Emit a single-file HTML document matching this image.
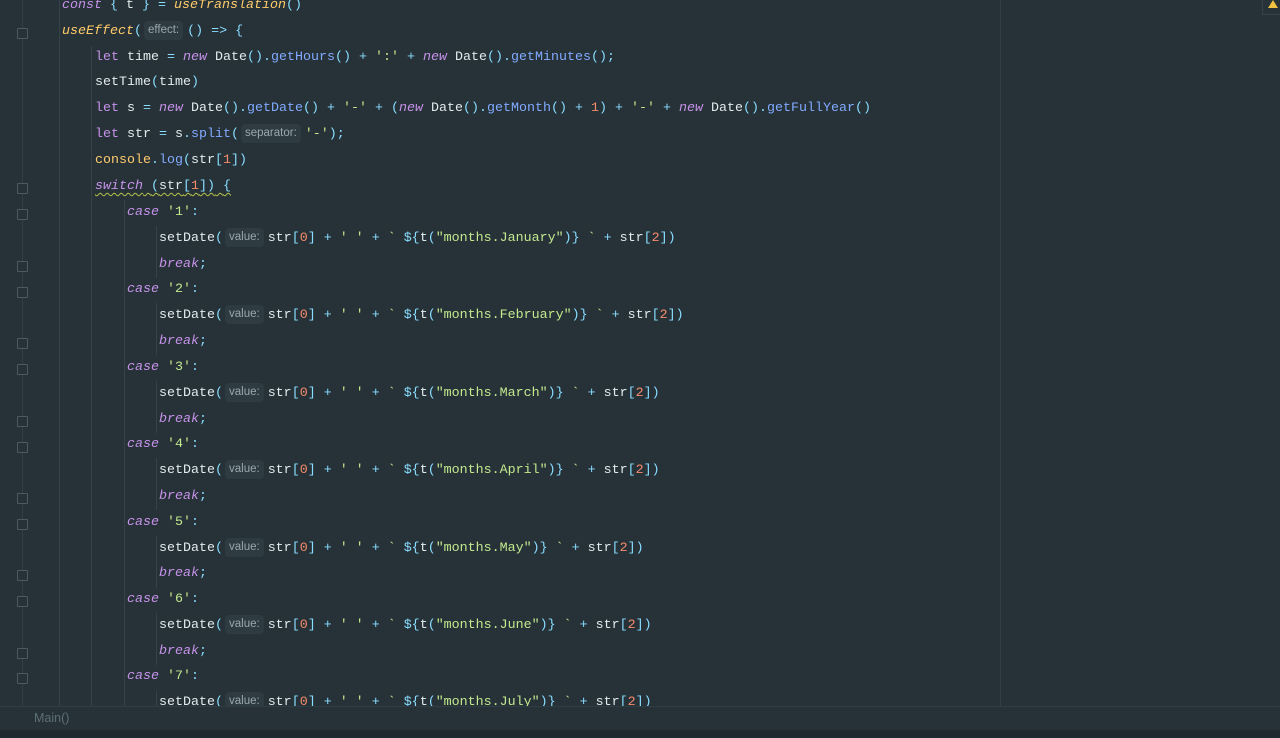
<!DOCTYPE html>
<html><head><meta charset="utf-8"><style>
html,body{margin:0;padding:0;background:#263238;width:1280px;height:738px;overflow:hidden}
.ed{position:absolute;left:0;top:0;width:1280px;height:706px;overflow:hidden}
.l{position:absolute;left:0;height:26px;margin-top:2px;line-height:26px;white-space:pre;font-family:"Liberation Mono",monospace;font-size:13.33px;color:#E2EBEC}
.k{color:#C792EA;font-style:italic}
.kn{color:#C792EA}
.f{color:#82AAFF}
.y{color:#FFCB6B}
.yi{color:#FFCB6B;font-style:italic}
.p{color:#89DDFF}
.s{color:#C3E88D}
.n{color:#F78C6C}
.h{display:inline-block;font-family:"Liberation Sans",sans-serif;font-size:11.5px;color:#9aa8ad;background:#2e3b41;border-radius:4px;padding:0 4px;line-height:19px;margin:0 4px 0 2px;vertical-align:1px}
.w{text-decoration:underline wavy #b6c34a;text-decoration-thickness:1px;text-underline-offset:3px}
.g{position:absolute;width:1px;background:#34434a}
.fm{position:absolute;left:17px;width:9px;height:9px;border:1px solid #4a5a60;border-radius:1px;background:#263238}
.bar{position:absolute;left:0;top:706px;width:1280px;height:24px;background:#263238;border-top:1px solid #2f3d44}
.bar span{position:absolute;left:34px;top:4px;font-family:"Liberation Sans",sans-serif;font-size:12.5px;color:#5d6f76}
.bot{position:absolute;left:0;top:730px;width:1280px;height:8px;background:#1f292e}
</style></head><body>
<div class="ed">
<div class="g" style="left:22px;top:0;height:706px;background:#303e45"></div>
<div class="g" style="left:59px;top:0;height:706px"></div>
<div class="g" style="left:91px;top:46px;height:660px"></div>
<div class="g" style="left:124px;top:200px;height:506px"></div>
<div class="g" style="left:156px;top:226px;height:52px"></div>
<div class="g" style="left:156px;top:303px;height:52px"></div>
<div class="g" style="left:156px;top:381px;height:52px"></div>
<div class="g" style="left:156px;top:458px;height:52px"></div>
<div class="g" style="left:156px;top:536px;height:52px"></div>
<div class="g" style="left:156px;top:613px;height:52px"></div>
<div class="g" style="left:156px;top:691px;height:15px"></div>
<div class="g" style="left:1000px;top:0;height:706px;background:#303e45"></div>
<div class="fm" style="top:28px"></div>
<div class="fm" style="top:183px"></div>
<div class="fm" style="top:209px"></div><div class="fm" style="top:261px"></div>
<div class="fm" style="top:287px"></div><div class="fm" style="top:338px"></div>
<div class="fm" style="top:364px"></div><div class="fm" style="top:416px"></div>
<div class="fm" style="top:442px"></div><div class="fm" style="top:493px"></div>
<div class="fm" style="top:519px"></div><div class="fm" style="top:570px"></div>
<div class="fm" style="top:596px"></div><div class="fm" style="top:648px"></div>
<div class="fm" style="top:673px"></div>
<div style="position:absolute;left:1262px;top:0;width:18px;height:14px;border-left:1px solid #34434a;border-bottom:1px solid #34434a"></div>
<div style="position:absolute;left:1268px;top:0;width:0;height:0;border-left:5px solid transparent;border-right:5px solid transparent;border-bottom:8px solid #f0c040"></div>

<div class="l" style="top:-9px;left:62px"><span class="k">const</span> <span class="p">{</span> t <span class="p">}</span> <span class="p">=</span> <span class="yi">useTranslation</span><span class="p">()</span></div>
<div class="l" style="top:17px;left:62px"><span class="yi">useEffect</span><span class="p">(</span><span class="h">effect:</span><span class="p">()</span> <span class="p">=&gt;</span> <span class="p">{</span></div>
<div class="l" style="top:43px;left:95px"><span class="kn">let</span> time <span class="p">=</span> <span class="k">new</span> Date<span class="p">().</span><span class="f">getHours</span><span class="p">()</span> <span class="p">+</span> <span class="s">':'</span> <span class="p">+</span> <span class="k">new</span> Date<span class="p">().</span><span class="f">getMinutes</span><span class="p">();</span></div>
<div class="l" style="top:68px;left:95px">setTime<span class="p">(</span>time<span class="p">)</span></div>
<div class="l" style="top:94px;left:95px"><span class="kn">let</span> s <span class="p">=</span> <span class="k">new</span> Date<span class="p">().</span><span class="f">getDate</span><span class="p">()</span> <span class="p">+</span> <span class="s">'-'</span> <span class="p">+</span> <span class="p">(</span><span class="k">new</span> Date<span class="p">().</span><span class="f">getMonth</span><span class="p">()</span> <span class="p">+</span> <span class="n">1</span><span class="p">)</span> <span class="p">+</span> <span class="s">'-'</span> <span class="p">+</span> <span class="k">new</span> Date<span class="p">().</span><span class="f">getFullYear</span><span class="p">()</span></div>
<div class="l" style="top:120px;left:95px"><span class="kn">let</span> str <span class="p">=</span> s<span class="p">.</span><span class="f">split</span><span class="p">(</span><span class="h">separator:</span><span class="s">'-'</span><span class="p">);</span></div>
<div class="l" style="top:146px;left:95px"><span class="y">console</span><span class="p">.</span><span class="f">log</span><span class="p">(</span>str<span class="p">[</span><span class="n">1</span><span class="p">])</span></div>
<div class="l" style="top:172px;left:95px"><span class="w"><span class="k">switch</span> <span class="p">(</span>str<span class="p">[</span><span class="n">1</span><span class="p">])</span> <span class="p">{</span></span></div>

<div class="l" style="top:198px;left:127px"><span class="k">case</span> <span class="s">'1'</span><span class="p">:</span></div>
<div class="l" style="top:224px;left:159px">setDate<span class="p">(</span><span class="h">value:</span>str<span class="p">[</span><span class="n">0</span><span class="p">]</span> <span class="p">+</span> <span class="s">' '</span> <span class="p">+</span> <span class="s">`</span> <span class="p">${</span>t<span class="p">(</span><span class="s">"months.January"</span><span class="p">)}</span> <span class="s">`</span> <span class="p">+</span> str<span class="p">[</span><span class="n">2</span><span class="p">])</span></div>
<div class="l" style="top:250px;left:159px"><span class="k">break</span><span class="p">;</span></div>
<div class="l" style="top:275px;left:127px"><span class="k">case</span> <span class="s">'2'</span><span class="p">:</span></div>
<div class="l" style="top:301px;left:159px">setDate<span class="p">(</span><span class="h">value:</span>str<span class="p">[</span><span class="n">0</span><span class="p">]</span> <span class="p">+</span> <span class="s">' '</span> <span class="p">+</span> <span class="s">`</span> <span class="p">${</span>t<span class="p">(</span><span class="s">"months.February"</span><span class="p">)}</span> <span class="s">`</span> <span class="p">+</span> str<span class="p">[</span><span class="n">2</span><span class="p">])</span></div>
<div class="l" style="top:327px;left:159px"><span class="k">break</span><span class="p">;</span></div>
<div class="l" style="top:353px;left:127px"><span class="k">case</span> <span class="s">'3'</span><span class="p">:</span></div>
<div class="l" style="top:379px;left:159px">setDate<span class="p">(</span><span class="h">value:</span>str<span class="p">[</span><span class="n">0</span><span class="p">]</span> <span class="p">+</span> <span class="s">' '</span> <span class="p">+</span> <span class="s">`</span> <span class="p">${</span>t<span class="p">(</span><span class="s">"months.March"</span><span class="p">)}</span> <span class="s">`</span> <span class="p">+</span> str<span class="p">[</span><span class="n">2</span><span class="p">])</span></div>
<div class="l" style="top:405px;left:159px"><span class="k">break</span><span class="p">;</span></div>
<div class="l" style="top:430px;left:127px"><span class="k">case</span> <span class="s">'4'</span><span class="p">:</span></div>
<div class="l" style="top:456px;left:159px">setDate<span class="p">(</span><span class="h">value:</span>str<span class="p">[</span><span class="n">0</span><span class="p">]</span> <span class="p">+</span> <span class="s">' '</span> <span class="p">+</span> <span class="s">`</span> <span class="p">${</span>t<span class="p">(</span><span class="s">"months.April"</span><span class="p">)}</span> <span class="s">`</span> <span class="p">+</span> str<span class="p">[</span><span class="n">2</span><span class="p">])</span></div>
<div class="l" style="top:482px;left:159px"><span class="k">break</span><span class="p">;</span></div>
<div class="l" style="top:508px;left:127px"><span class="k">case</span> <span class="s">'5'</span><span class="p">:</span></div>
<div class="l" style="top:534px;left:159px">setDate<span class="p">(</span><span class="h">value:</span>str<span class="p">[</span><span class="n">0</span><span class="p">]</span> <span class="p">+</span> <span class="s">' '</span> <span class="p">+</span> <span class="s">`</span> <span class="p">${</span>t<span class="p">(</span><span class="s">"months.May"</span><span class="p">)}</span> <span class="s">`</span> <span class="p">+</span> str<span class="p">[</span><span class="n">2</span><span class="p">])</span></div>
<div class="l" style="top:559px;left:159px"><span class="k">break</span><span class="p">;</span></div>
<div class="l" style="top:585px;left:127px"><span class="k">case</span> <span class="s">'6'</span><span class="p">:</span></div>
<div class="l" style="top:611px;left:159px">setDate<span class="p">(</span><span class="h">value:</span>str<span class="p">[</span><span class="n">0</span><span class="p">]</span> <span class="p">+</span> <span class="s">' '</span> <span class="p">+</span> <span class="s">`</span> <span class="p">${</span>t<span class="p">(</span><span class="s">"months.June"</span><span class="p">)}</span> <span class="s">`</span> <span class="p">+</span> str<span class="p">[</span><span class="n">2</span><span class="p">])</span></div>
<div class="l" style="top:637px;left:159px"><span class="k">break</span><span class="p">;</span></div>
<div class="l" style="top:662px;left:127px"><span class="k">case</span> <span class="s">'7'</span><span class="p">:</span></div>
<div class="l" style="top:688px;left:159px">setDate<span class="p">(</span><span class="h">value:</span>str<span class="p">[</span><span class="n">0</span><span class="p">]</span> <span class="p">+</span> <span class="s">' '</span> <span class="p">+</span> <span class="s">`</span> <span class="p">${</span>t<span class="p">(</span><span class="s">"months.July"</span><span class="p">)}</span> <span class="s">`</span> <span class="p">+</span> str<span class="p">[</span><span class="n">2</span><span class="p">])</span></div>
</div>
<div class="bar"><span>Main()</span></div>
<div class="bot"></div>
</body></html>
